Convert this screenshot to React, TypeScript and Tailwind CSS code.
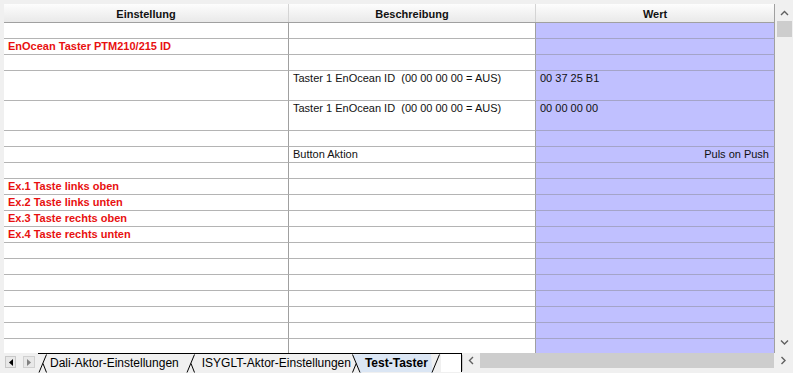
import React from "react";

type Row = { h: 16 | 30; a?: string; b?: string; c?: string; right?: boolean };

const rows: Row[] = [
  { h: 16 },
  { h: 16, a: "EnOcean Taster PTM210/215 ID" },
  { h: 16 },
  { h: 30, b: "Taster 1 EnOcean ID  (00 00 00 00 = AUS)", c: "00 37 25 B1" },
  { h: 30, b: "Taster 1 EnOcean ID  (00 00 00 00 = AUS)", c: "00 00 00 00" },
  { h: 16 },
  { h: 16, b: "Button Aktion", c: "Puls on Push", right: true },
  { h: 16 },
  { h: 16, a: "Ex.1 Taste links oben" },
  { h: 16, a: "Ex.2 Taste links unten" },
  { h: 16, a: "Ex.3 Taste rechts oben" },
  { h: 16, a: "Ex.4 Taste rechts unten" },
  { h: 16 },
  { h: 16 },
  { h: 16 },
  { h: 16 },
  { h: 16 },
  { h: 16 },
  { h: 16 },
];

function SlantA() {
  return (
    <svg width="11" height="19" viewBox="0 0 11 19" className="shrink-0">
      <line x1="1" y1="18.5" x2="8.5" y2="0.5" stroke="#000" strokeWidth="1" />
      <line x1="5" y1="9.5" x2="8.5" y2="18.5" stroke="#000" strokeWidth="1" />
    </svg>
  );
}

function SlantB() {
  return (
    <svg width="11" height="19" viewBox="0 0 11 19" className="shrink-0">
      <polygon points="2,0.5 11,0.5 11,19 9.5,19" fill="#dbe6f4" />
      <line x1="1.5" y1="0.5" x2="9" y2="18.5" stroke="#000" strokeWidth="1" />
      <line x1="1.5" y1="18.5" x2="5.2" y2="9.5" stroke="#000" strokeWidth="1" />
    </svg>
  );
}

function SlantC() {
  return (
    <svg width="10" height="19" viewBox="0 0 10 19" className="shrink-0">
      <polygon points="0,0.5 0,19 1.5,19" fill="#dbe6f4" />
      <line x1="1" y1="18.5" x2="8.5" y2="0.5" stroke="#000" strokeWidth="1" />
    </svg>
  );
}

function Chevron({ dir }: { dir: "up" | "down" | "left" | "right" }) {
  const d =
    dir === "up"
      ? "M1 5 L4.5 1.5 L8 5"
      : dir === "down"
      ? "M1 1.5 L4.5 5 L8 1.5"
      : dir === "left"
      ? "M5 1 L1.5 4.5 L5 8"
      : "M1.5 1 L5 4.5 L1.5 8";
  const w = dir === "up" || dir === "down" ? 9 : 7;
  const h = dir === "up" || dir === "down" ? 7 : 9;
  return (
    <svg width={w} height={h} viewBox={`0 0 ${w} ${h}`}>
      <path d={d} fill="none" stroke="#606060" strokeWidth="1.4" />
    </svg>
  );
}

export default function App() {
  return (
    <div className="w-[793px] h-[373px] bg-[#f0f0f0] flex flex-col overflow-hidden font-['Liberation_Sans',Arial,sans-serif] text-[11px] text-black">
      <div className="flex h-[353px]">
        <div className="w-[775px] pl-[4px] pt-[4px] flex flex-col">
          {/* header */}
          <div className="grid grid-cols-[285px_247px_239px] h-[19px] border-b border-[#a0a0a0] bg-gradient-to-b from-[#fdfdfd] to-[#e9e9e9] font-bold text-[#111] leading-[16px] shrink-0">
            <div className="border-r border-[#d4d4d4] text-center pt-[2px]">Einstellung</div>
            <div className="border-r border-[#d4d4d4] text-center pt-[2px]">Beschreibung</div>
            <div className="border-r border-[#a0a0a0] text-center pt-[2px]">Wert</div>
          </div>
          {/* body */}
          <div className="flex-1 overflow-hidden flex flex-col">
            {rows.map((r, i) => (
              <div
                key={i}
                className={`grid grid-cols-[285px_247px_239px] shrink-0 ${r.h === 30 ? "h-[30px]" : "h-[16px]"}`}
              >
                <div className="bg-white border-r border-b border-r-[#a0a0a0] border-b-[#b4b4b4] pl-[4px] leading-[15px] font-bold text-[#e81010] whitespace-pre">
                  {r.a ?? ""}
                </div>
                <div className="bg-white border-r border-b border-r-[#a0a0a0] border-b-[#b4b4b4] pl-[4px] leading-[15px] whitespace-pre text-[#111]">
                  {r.b ?? ""}
                </div>
                <div
                  className={`bg-[#c0c0ff] border-r border-b border-r-[#a0a0a0] border-b-[#a4a4c8] leading-[15px] whitespace-pre text-[#111] ${
                    r.right ? "text-right pr-[5px]" : "pl-[4px]"
                  }`}
                >
                  {r.c ?? ""}
                </div>
              </div>
            ))}
          </div>
        </div>
        {/* vertical scrollbar */}
        <div className="w-[18px] flex flex-col items-center">
          <div className="h-[21px] flex items-center justify-center pt-[5px]">
            <Chevron dir="up" />
          </div>
          <div className="w-[15px] h-[16px] bg-[#cdcdcd]" />
          <div className="flex-1" />
          <div className="h-[18px] flex items-center justify-center pb-[4px]">
            <Chevron dir="down" />
          </div>
        </div>
      </div>
      {/* tab bar */}
      <div className="h-[20px] flex items-start">
        <div className="flex items-center pl-[5px] pt-[3px] gap-[7px] w-[38px] shrink-0">
          <div className="w-[11px] h-[12px] bg-[#e8e8e8] border border-[#c8c8c8] flex items-center justify-center">
            <svg width="4" height="7" viewBox="0 0 4 7">
              <polygon points="4,0 0,3.5 4,7" fill="#000" />
            </svg>
          </div>
          <div className="w-[12px] h-[12px] bg-[#e8e8e8] border border-[#d0d0d0] flex items-center justify-center">
            <svg width="4" height="7" viewBox="0 0 4 7">
              <polygon points="0,0 4,3.5 0,7" fill="#808080" />
            </svg>
          </div>
        </div>
        <div className="flex items-stretch h-[19px] border-t border-black text-[12px] leading-[18px] w-[424px] shrink-0">
          <SlantA />
          <div className="pl-[1px] pr-[7px] whitespace-nowrap">Dali-Aktor-Einstellungen</div>
          <SlantA />
          <div className="pl-[5px] whitespace-nowrap">ISYGLT-Aktor-Einstellungen</div>
          <SlantB />
          <div className="bg-[#dbe6f4] font-bold pl-[3px] pr-[3px] whitespace-nowrap">Test-Taster</div>
          <SlantC />
          <div className="flex-1 bg-white border-r border-black" />
        </div>
        <div className="w-[1px] h-[16px] mt-[2px] bg-[#c8c8c8] shrink-0" />
        <div className="flex-1 flex items-start">
          <div className="w-[17px] h-[15px] flex items-center justify-center">
            <Chevron dir="left" />
          </div>
          <div className="w-[294px] h-[15px] bg-[#cdcdcd]" />
          <div className="flex-1 h-[15px] flex items-center justify-center">
            <Chevron dir="right" />
          </div>
        </div>
      </div>
    </div>
  );
}
